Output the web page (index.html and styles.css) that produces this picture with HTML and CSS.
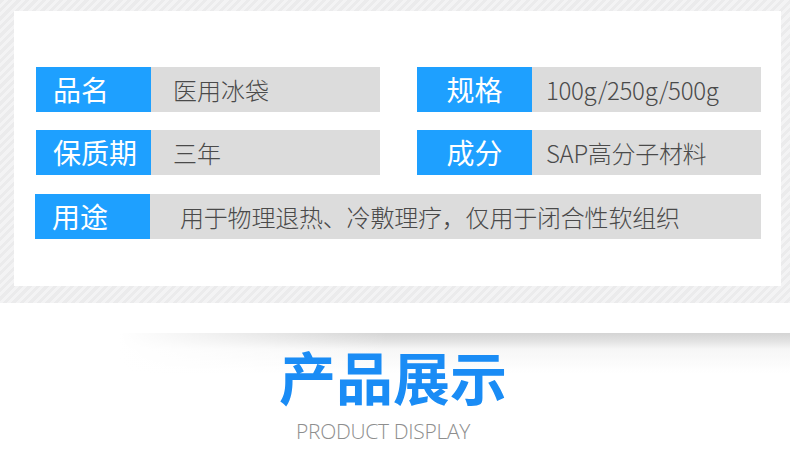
FILE: index.html
```html
<!DOCTYPE html>
<html lang="zh-CN">
<head>
    <meta charset="UTF-8">
    <meta name="viewport" content="width=device-width, initial-scale=1.0">
    <title>医用冰袋 - 产品参数</title>
    <link rel="stylesheet" href="styles.css">
</head>
<body>

    <div class="canshu">
        <div class="panel">
            <div class="tablo">
                <div class="satir">
                    <div class="etiket">品名</div>
                    <div class="deger">医用冰袋</div>
                </div>
                <div class="satir sag">
                    <div class="etiket">规格</div>
                    <div class="deger">100g/250g/500g</div>
                </div>
                <div class="satir">
                    <div class="etiket">保质期</div>
                    <div class="deger">三年</div>
                </div>
                <div class="satir sag">
                    <div class="etiket">成分</div>
                    <div class="deger">SAP高分子材料</div>
                </div>
                <div class="satir genis">
                    <div class="etiket">用途</div>
                    <div class="deger">用于物理退热、冷敷理疗，仅用于闭合性软组织</div>
                </div>
            </div>
        </div>
    </div>

    <div class="zhanshi">
        <div class="ayirici"></div>
        <h2 class="baslik">产品展示</h2>
        <p class="altbaslik">PRODUCT DISPLAY</p>
    </div>

</body>
</html>
```

FILE: styles.css
```css
body {
    margin: 0;
    font-family: "Noto Sans CJK SC", "Noto Sans", sans-serif;
    background: #fff;
}
.canshu {
    height: 303px;
    box-sizing: border-box;
    padding: 11px 9px 17px 14px;
    /* çizgili gri arka plan */
    background: repeating-linear-gradient(135deg, #ebebec 0 3px, #f3f3f4 3px 6px);
}
.panel {
    height: 275px;
    background: #fff;
    box-sizing: border-box;
    padding: 56px 0 0 22px;
}
.tablo {
    display: grid;
    grid-template-columns: 344px 344px;
    column-gap: 37px;
    row-gap: 18px;
}
.satir {
    display: flex;
    height: 45px;
    background: #dcdcdc;
}
.genis {
    grid-column: 1 / 3;
    margin-left: -1px;
    margin-top: 1px;
}
.etiket {
    width: 115px;
    flex-shrink: 0;
    background: #1ea0ff;
    color: #fff;
    font-size: 28px;
    line-height: 45px;
    padding-left: 17px;
    box-sizing: border-box;
}
.sag .etiket {
    padding-left: 0;
    text-align: center;
}
.deger {
    font-size: 24px;
    line-height: 45px;
    color: #4a4a4a;
    font-weight: 300;
    padding-left: 22px;
}
.sag .deger {
    padding-left: 14px;
    letter-spacing: -0.3px;
}
.genis .deger {
    padding-left: 30px;
    letter-spacing: -0.2px;
}
.zhanshi {
    position: relative;
    height: 164px;
    text-align: center;
}
.ayirici {
    position: absolute;
    left: 120px;
    right: 0;
    top: 30px;
    height: 40px;
    background:
        linear-gradient(to right, rgba(255,255,255,1) 0%, rgba(255,255,255,0) 40%),
        linear-gradient(to bottom, #d4d4d4 0px, #e2e2e2 8px, rgba(240,240,240,0.6) 16px, rgba(255,255,255,0) 40px);
}
.baslik {
    position: relative;
    margin: 0;
    padding-top: 36px;
    padding-right: 4px;
    font-size: 57px;
    line-height: 72px;
    font-weight: 700;
    color: #1a8cf5;
}
.altbaslik {
    position: relative;
    margin: 6px 0 0 0;
    padding-right: 24px;
    font-family: "Open Sans", sans-serif;
    font-weight: 300;
    font-size: 21px;
    color: #8e8e8e;
    letter-spacing: -0.3px;
}
```
